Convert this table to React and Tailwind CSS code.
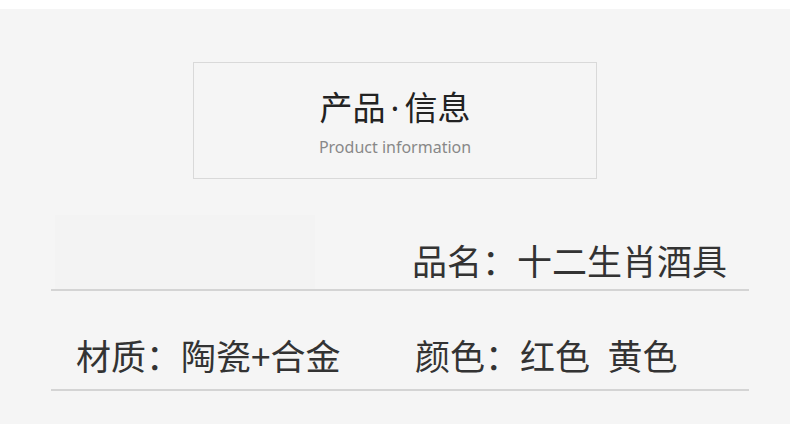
import React from "react";

const cjk = { fontFamily: '"Noto Sans CJK SC", "Noto Sans", sans-serif' };
const latin = { fontFamily: '"Noto Sans", sans-serif' };

export default function App() {
  return (
    <div className="w-[790px] h-[424px] bg-white pt-[9px] overflow-hidden" style={cjk}>
      <div className="h-[415px] bg-[#f5f5f5] pt-[53px]">
        {/* title box */}
        <div className="mx-auto w-[404px] h-[117px] border border-[#d9d9d9] flex flex-col items-center pt-[23px]">
          <div className="text-[33px] leading-[40px] text-[#222]">
            产品<span className="mx-[5px]" style={latin}>·</span>信息
          </div>
          <div className="mt-[9px] text-[16px] leading-[20px] text-[#888]" style={latin}>
            Product information
          </div>
        </div>

        {/* row 1 */}
        <div className="ml-[51px] mr-[41px] mt-[36px] grid grid-cols-[361px_1fr] items-end">
          <div className="h-[74px] w-[260px] ml-[4px] bg-[#f3f3f3]" />
          <div className="text-[35px] leading-[48px] text-[#333] mb-[5px]">品名：十二生肖酒具</div>
        </div>
        <div className="ml-[51px] mr-[41px] h-[2px] bg-[#d4d4d4]" />

        {/* row 2 */}
        <div className="ml-[51px] mr-[41px] mt-[40px] grid grid-cols-[364px_1fr] text-[35px] leading-[48px] text-[#333]">
          <div className="pl-[25px]">材质：陶瓷+合金</div>
          <div>颜色：红色{"\u2002"}黄色</div>
        </div>
        <div className="ml-[51px] mr-[41px] mt-[10px] h-[2px] bg-[#d4d4d4]" />
      </div>
    </div>
  );
}
